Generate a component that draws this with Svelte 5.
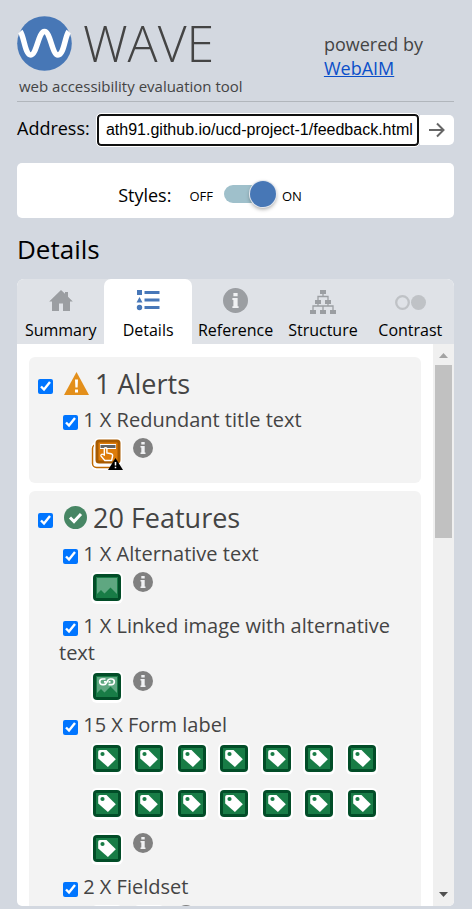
<script>
  const tabs = [
    { id: 'summary', label: 'Summary' },
    { id: 'details', label: 'Details' },
    { id: 'reference', label: 'Reference' },
    { id: 'structure', label: 'Structure' },
    { id: 'contrast', label: 'Contrast' },
  ];

  const groups = [
    {
      kind: 'alert',
      title: '1 Alerts',
      items: [{ id: 'title', text: '1 X Redundant title text', icon: 'redundant', count: 1 }],
    },
    {
      kind: 'feature',
      title: '20 Features',
      items: [
        { id: 'alt', text: '1 X Alternative text', icon: 'image', count: 1 },
        { id: 'altlink', text: '1 X Linked image with alternative text', icon: 'linked', count: 1 },
        { id: 'label', text: '15 X Form label', icon: 'tag', count: 15 },
        { id: 'fieldset', text: '2 X Fieldset', icon: 'fieldset', count: 2 },
      ],
    },
  ];

  let active = $state('details');
  let stylesOn = $state(true);
  let address = $state('ath91.github.io/ucd-project-1/feedback.html');
</script>

{#snippet info(size)}
  <svg width={size} height={size} viewBox="0 0 20 20" aria-hidden="true">
    <circle cx="10" cy="10" r="10" fill="currentColor" />
    <path d="M8.300 4h3.400v2.600H8.300zM7.500 8h4.200v6.500h.8V16h-5v-1.500h.8v-5h-.8z" class="cut" />
  </svg>
{/snippet}

{#snippet tabIcon(id)}
  {#if id === 'summary'}
    <svg width="26" height="26" viewBox="0 0 26 26" aria-hidden="true">
      <path d="M13 2 1.200 13.400H4V23h7v-7.600h4V23h7v-9.600h2.800L20 8.700V4h-3v1.800z" fill="#9b9ea2" />
    </svg>
  {:else if id === 'details'}
    <svg width="26" height="26" viewBox="0 0 26 26" fill="#4777b8" aria-hidden="true">
      <path d="M2 2h5v5H2zM4.500 9l3 5.500h-6zM9.500 3h15v3h-15zM9.500 10.500h15v3h-15zM9.500 18h15v3h-15z" />
      <circle cx="4.500" cy="19.500" r="2.700" />
    </svg>
  {:else if id === 'reference'}
    {@render info(25)}
  {:else if id === 'structure'}
    <svg width="26" height="26" viewBox="0 0 26 26" aria-hidden="true">
      <path d="M13 5v3.500M8 12V8.500h10V12M8 15v3M18 15v3M3 22v-4h20v4M13 22v-4" fill="none" stroke="#9b9ea2" stroke-width="1.300" />
      <path d="M10 2h6v4h-6zM5 12h6v4H5zM15 12h6v4h-6zM0 22h6v4H0zM10 22h6v4h-6zM20 22h6v4h-6z" fill="#9b9ea2" />
    </svg>
  {:else}
    <svg width="32" height="26" viewBox="0 0 32 26" aria-hidden="true">
      <circle cx="8.500" cy="14.500" r="6.300" fill="none" stroke="#bfc2c6" stroke-width="2.300" />
      <circle cx="24.500" cy="14.500" r="7.500" fill="#bfc2c6" />
    </svg>
  {/if}
{/snippet}

{#snippet itemIcon(kind)}
  <svg width="32" height="32" viewBox="0 0 32 32" aria-hidden="true">
    {#if kind === 'redundant'}
      <rect x="0" y="4" width="28" height="28" rx="5" fill="#fff" />
      <rect x="1.500" y="6.500" width="25" height="23" rx="4" fill="#fff" stroke="#c06a00" stroke-width="1.500" />
      <rect x="3" y="0" width="28" height="28" rx="5" fill="#fff" />
      <rect x="6" y="3" width="22" height="21" rx="2" fill="#dd7c0a" stroke="#a85b00" stroke-width="3" />
      <path d="M9 8.500h16" stroke="#fff" stroke-width="5" />
      <path d="M9.500 8.500h15" stroke="#636363" stroke-width="3" />
      <path d="M13.300 17V11c0-1.700 2.600-1.700 2.600 0v4l4.300.8c1.200.2 1.600 1.200 1.400 2.200l-1 4.500h-6.800l-3.700-4.400c-.8-1.300.9-2.500 1.900-1.600z" fill="#dd7c0a" stroke="#fff" stroke-width="1.400" />
      <path d="M24.500 20 32 32H17z" fill="#000" />
      <path d="M24.500 24v3.500M24.500 28.700v1.600" stroke="#fff" stroke-width="1.500" />
    {:else}
      <rect width="32" height="32" rx="6" fill="#fff" />
      <rect x="2" y="2" width="28" height="27" rx="4" fill="#024d28" />
      <rect x="5" y="5" width="22" height="21" fill="#187c46" />
      {#if kind === 'tag'}
        <path d="M9 7h6.500l9.300 9.200-7.900 7.800-9.700-8.500V9c0-1.100.7-2 1.800-2z" fill="#fff" />
        <circle cx="11.500" cy="11" r="2.100" fill="#187c46" />
      {:else if kind === 'fieldset'}
        <rect x="8" y="9" width="16" height="13" fill="none" stroke="#fff" stroke-width="2" />
      {:else}
        <path d="M6 6h20v16l-6.500-6.500-6 6-3.500-3.500-4 4z" fill="#5fa781" />
      {/if}
      {#if kind === 'linked'}
        <g fill="none" stroke="#fff" stroke-width="1.700">
          <path d="M14.500 8h-3a2.800 2.800 0 0 0 0 5.600h1.500c3.500 0 2.500-5.600 6-5.600h1.500a2.800 2.800 0 0 1 0 5.600h-3" />
          <path d="M13 10.800h2M17.500 10.800h2" />
        </g>
      {/if}
    {/if}
  </svg>
{/snippet}

<main class="sidebar">
  <header>
    <div class="brand">
      <h1>
        <svg width="55" height="55" viewBox="0 0 55 55" aria-hidden="true">
          <circle cx="27.500" cy="27.500" r="27.300" fill="#4777b6" />
          <path d="M3.300 15.500C7 20 8 39 13.800 39S21.500 15.500 27.500 15.500 35 39 41 39 48 20 51.700 15.500" fill="none" stroke="#fff" stroke-width="5.500" />
        </svg>
        <span>WAVE</span>
      </h1>
      <p>web accessibility evaluation tool</p>
    </div>
    <p class="powered">powered by<br /><a href="#webaim">WebAIM</a></p>
  </header>

  <form class="address" onsubmit={(e) => e.preventDefault()}>
    <label for="address">Address:</label>
    <input id="address" type="text" bind:value={address} />
    <button type="submit" aria-label="Go">
      <svg width="18" height="18" viewBox="0 0 18 18" aria-hidden="true">
        <path d="M1 9h14.500M9 2.500 15.500 9 9 15.500" fill="none" stroke="#666" stroke-width="2" />
      </svg>
    </button>
  </form>

  <section class="styles">
    <label for="styles">Styles:</label>
    <span>OFF</span>
    <input id="styles" type="checkbox" role="switch" bind:checked={stylesOn} />
    <span>ON</span>
  </section>

  <h2>Details</h2>

  <div class="panel">
    <div class="tabs" role="tablist">
      {#each tabs as tab}
        <button
          type="button"
          role="tab"
          class:active={active === tab.id}
          aria-selected={active === tab.id}
          onclick={() => (active = tab.id)}
        >
          <span class="glyph">{@render tabIcon(tab.id)}</span>
          {tab.label}
        </button>
      {/each}
    </div>
    <div class="body">
      <div class="list">
        {#each groups as group}
          <section class="group">
            <h3>
              <input type="checkbox" id={group.kind} checked />
              <label for={group.kind}>
                {#if group.kind === 'alert'}
                  <svg width="25" height="24" viewBox="0 0 25 24" aria-hidden="true">
                    <path d="M12.500 0 25 23H0z" fill="#e38f1b" />
                    <path d="M11 7.500h3l-.4 8h-2.200zM11 17.500h3v3h-3z" fill="#fff" />
                  </svg>
                {:else}
                  <svg width="23" height="24" viewBox="0 0 23 24" aria-hidden="true">
                    <circle cx="11.500" cy="11.500" r="11.500" fill="#478664" />
                    <path d="m6 11.500 4 4 7-7.500" fill="none" stroke="#fff" stroke-width="3" />
                  </svg>
                {/if}
                <span>{group.title}</span>
              </label>
            </h3>
            <ul>
              {#each group.items as item}
                <li>
                  <input type="checkbox" id={item.id} checked />
                  <label for={item.id}>{item.text}</label>
                  <div class="icons">
                    {#each { length: item.count } as _}
                      <button type="button" aria-label={item.text}>{@render itemIcon(item.icon)}</button>
                    {/each}
                    <button type="button" class="info" aria-label="Information">{@render info(20)}</button>
                  </div>
                </li>
              {/each}
            </ul>
          </section>
        {/each}
      </div>
      <div class="scrollbar" aria-hidden="true">
        <svg width="9" height="5" viewBox="0 0 9 5"><path d="M4.500 0 9 5H0z" fill="#a3a3a3" /></svg>
        <div class="track"><div class="thumb"></div></div>
        <svg width="9" height="5" viewBox="0 0 9 5"><path d="M0 0h9L4.500 5z" fill="#505050" /></svg>
      </div>
    </div>
  </div>
</main>

<style>
  :global(body) {
    background: #d3d8e0;
  }
  * {
    box-sizing: border-box;
  }
  svg {
    display: block;
    flex: none;
  }
  h1,
  h2,
  h3,
  p,
  ul {
    margin: 0;
    padding: 0;
    font-weight: 400;
  }
  button {
    padding: 0;
    border: 0;
    background: none;
    font: inherit;
    color: inherit;
  }
  .sidebar {
    display: flex;
    flex-direction: column;
    height: 100vh;
    padding: 16px 18px 3px 17px;
    overflow: hidden;
    font-family: 'Open Sans', 'Noto Sans', sans-serif;
    font-size: 18px;
    color: #000;
  }
  header {
    display: flex;
    justify-content: space-between;
    flex: none;
    height: 86px;
    border-bottom: 1px solid #b1b6bc;
    color: #444;
  }
  h1 {
    display: flex;
    align-items: center;
    gap: 11px;
    height: 55px;
    font-size: 50px;
    font-weight: 300;
    line-height: 55px;
  }
  .brand p {
    padding: 5px 0 0 2px;
    font-size: 15px;
    line-height: 20px;
  }
  .powered {
    padding: 16px 31px 0 0;
    line-height: 24px;
  }
  .powered a {
    color: #0b4fc9;
  }
  .address {
    display: flex;
    align-items: flex-start;
    flex: none;
    margin-top: 12px;
  }
  .address label {
    margin-right: 7px;
    line-height: 28px;
  }
  .address input {
    flex: 1;
    min-width: 0;
    height: 32px;
    padding: 0 0 0 3px;
    border: 2px solid #101010;
    border-radius: 4px;
    outline: 1px solid #fff;
    background: #fff;
    font: 16px 'Liberation Sans', Arial, sans-serif;
    text-align: center;
  }
  .address button {
    display: flex;
    align-items: center;
    justify-content: center;
    width: 34px;
    height: 30px;
    margin: 1px 0 0 1px;
    border-radius: 0 5px 5px 0;
    background: #fff;
  }
  .styles {
    display: flex;
    align-items: center;
    justify-content: center;
    flex: none;
    height: 55px;
    margin-top: 17px;
    padding: 8px 51px 0 0;
    border-radius: 5px;
    background: #fff;
  }
  .styles label {
    margin-right: 18px;
  }
  .styles span {
    padding-top: 2px;
    font-size: 13px;
  }
  .styles input {
    appearance: none;
    position: relative;
    width: 50px;
    height: 18px;
    margin: 0 8px 2px 11px;
    border-radius: 9px;
    background: #9fc0cb;
  }
  .styles input::after {
    content: '';
    position: absolute;
    top: -4px;
    left: 0;
    width: 26px;
    height: 26px;
    border-radius: 50%;
    background: #4777b6;
    box-shadow: 0 0 0 1px #e4e8ee, 0 2px 4px #0006;
  }
  .styles input:checked::after {
    left: 26px;
  }
  h2 {
    flex: none;
    padding: 13px 0 12px;
    font-size: 26px;
    line-height: 36px;
  }
  .panel {
    display: flex;
    flex-direction: column;
    flex: 1;
    min-height: 0;
    overflow: hidden;
    border-radius: 7px 7px 5px 5px;
    background: #fff;
  }
  .tabs {
    display: flex;
    flex: none;
    background: #dfe2e7;
  }
  .tabs button {
    display: flex;
    flex-direction: column;
    align-items: center;
    flex: 1 1 0;
    min-width: 0;
    height: 65px;
    padding-top: 8px;
    border-radius: 7px 7px 0 0;
    color: #000;
    font-size: 16px;
    line-height: 22px;
  }
  .tabs button.active {
    background: #fff;
  }
  .glyph {
    height: 32px;
    padding-top: 1px;
    color: #9b9ea2;
  }
  .cut {
    fill: #f0f1f3;
  }
  .body {
    display: flex;
    flex: 1;
    min-height: 0;
  }
  .list {
    display: flex;
    flex-direction: column;
    gap: 8px;
    flex: 1;
    padding: 13px 12px 0;
    overflow: hidden;
    color: #444;
  }
  .group {
    flex: none;
    padding: 0 0 5px;
    border-radius: 6px;
    background: #f3f3f3;
  }
  .group input {
    width: 15px;
    height: 15px;
    margin: 0;
  }
  h3 {
    display: flex;
    align-items: center;
    gap: 11px;
    padding: 9px 0 4px 9px;
    font-size: 27px;
    line-height: 36px;
  }
  .group h3 input {
    margin-top: 4px;
  }
  h3 label {
    display: flex;
    align-items: center;
    gap: 6px;
  }
  ul {
    list-style: none;
  }
  li {
    padding-left: 30px;
    font-size: 20px;
    line-height: 27px;
  }
  .group li input {
    margin-left: 4px;
    vertical-align: -3px;
  }
  .icons {
    display: grid;
    grid-template-columns: repeat(7, 1fr);
    grid-auto-rows: 45px;
    padding: 0 33px 0 32px;
  }
  .icons button {
    align-self: start;
    justify-self: start;
    margin-top: 5px;
  }
  .icons .info {
    color: #808080;
  }
  .scrollbar {
    display: flex;
    flex-direction: column;
    align-items: center;
    flex: none;
    width: 21px;
    padding: 9px 2px;
    background: #f0f0f0;
  }
  .track {
    flex: 1;
    align-self: stretch;
    margin: 7px 0;
  }
  .thumb {
    height: calc(100% / 3);
    background: #c1c1c1;
  }
</style>
